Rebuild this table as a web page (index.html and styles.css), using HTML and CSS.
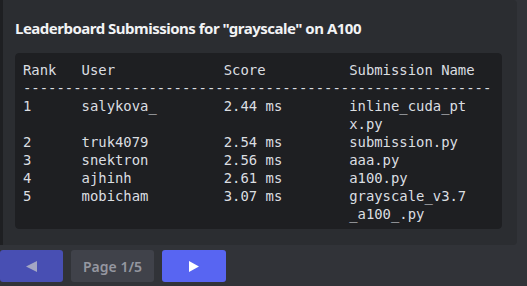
FILE: index.html
```html
<!DOCTYPE html>
<html>
<head>
<meta charset="utf-8">
<link rel="stylesheet" href="styles.css">
</head>
<body>
<div class="embed">
  <div class="title">Leaderboard Submissions for "grayscale" on A100</div>
  <pre class="code"><code>Rank   User             Score          Submission Name
--------------------------------------------------------
1      salykova_        2.44 ms        inline_cuda_pt
                                       x.py
2      truk4079         2.54 ms        submission.py
3      snektron         2.56 ms        aaa.py
4      ajhinh           2.61 ms        a100.py
5      mobicham         3.07 ms        grayscale_v3.7
                                       _a100_.py</code></pre>
</div>
<div class="buttons">
  <div class="btn btn-prev"><svg width="11" height="11" viewBox="0 0 11 11"><polygon points="11,0 11,11 0,5.5" fill="#a3a6c4"/></svg></div>
  <div class="btn btn-page">Page 1/5</div>
  <div class="btn btn-next"><svg width="10" height="11" viewBox="0 0 10 11"><polygon points="0,0 10,5.5 0,11" fill="#ffffff"/></svg></div>
</div>
</body>
</html>
```
FILE: styles.css
```css
html, body {
  margin: 0;
  padding: 0;
  background: #313338;
}
body {
  width: 527px;
  height: 286px;
  overflow: hidden;
}
.embed {
  width: 517px;
  box-sizing: border-box;
  background: #2b2d31;
  border-left: 3px solid #1e1f22;
  border-radius: 0 4px 4px 0;
  padding: 17px 15px 16px 12px;
}
.title {
  font-family: "Noto Sans", sans-serif;
  font-weight: 700;
  font-size: 15px;
  letter-spacing: -0.5px;
  line-height: 22px;
  color: #f2f3f5;
  margin-bottom: 14px;
}
.code {
  margin: 0;
  background: #1e1f22;
  border: 1px solid #1e1f22;
  border-radius: 4px;
  padding: 7px 7px 5px 7px;
  font-family: "DejaVu Sans Mono", monospace;
  font-size: 13.9px;
  line-height: 18px;
  color: #dbdee1;
  white-space: pre;
}
.code code {
  font-family: inherit;
}
.buttons {
  display: flex;
  gap: 8px;
  margin-top: 5px;
}
.btn {
  height: 32px;
  border-radius: 3px;
  display: flex;
  align-items: center;
  justify-content: center;
  font-family: "Noto Sans", sans-serif;
  font-size: 14px;
  font-weight: 600;
}
.btn-prev {
  width: 63px;
  background: #484fb3;
}
.btn-page {
  width: 83px;
  background: #40424a;
  color: #9597a0;
}
.btn-next {
  width: 64px;
  background: #5865f2;
}
```
